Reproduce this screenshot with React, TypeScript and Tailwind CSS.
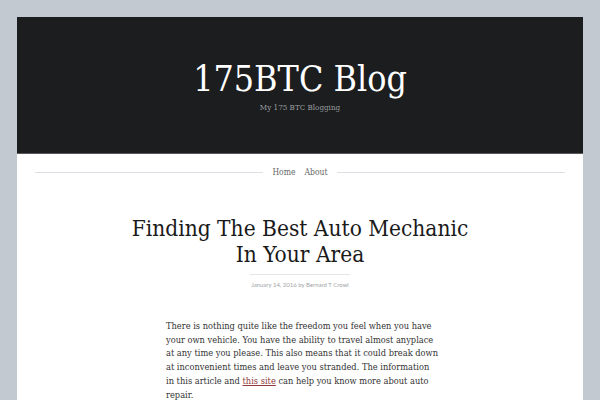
export default function App() {
  const serif = { fontFamily: '"DejaVu Serif Condensed", "DejaVu Serif", serif' };
  return (
    <div className="min-h-screen bg-[#c2c9d1] px-[17px] pt-[17px]">
      <div className="bg-white">
        <header
          className="flex h-[137px] flex-col items-center justify-center border-b border-[#55575a] bg-[#1c1d1f] text-center"
          style={serif}
        >
          <h1 className="mt-[3px] text-[35.5px] leading-[40px] text-white">175BTC Blog</h1>
          <p className="mt-[3px] text-[8px] text-[#9a9c9f]">My 175 BTC Blogging</p>
        </header>

        <nav className="flex items-center gap-[9px] px-[18px] pt-[12px]" style={serif}>
          <div className="h-px flex-1 bg-[#dcdfe3]" />
          <a className="text-[8.5px] leading-[13px] text-[#666]">Home</a>
          <a className="text-[8.5px] leading-[13px] text-[#666]">About</a>
          <div className="h-px flex-1 bg-[#dcdfe3]" />
        </nav>

        <article className="pt-[36px]">
          <h2
            className="mx-auto w-[400px] text-center text-[22.5px] leading-[26px] text-[#1a1a1a]"
            style={serif}
          >
            Finding The Best Auto Mechanic
            <br />
            In Your Area
          </h2>
          <div className="mx-auto mt-[7px] h-px w-[100px] bg-[#e3e5e8]" />
          <p
            className="mt-[5px] text-center text-[6px] leading-[9px] text-[#a0a3a7]"
            style={{ fontFamily: 'Lato, "Liberation Sans", sans-serif' }}
          >
            January 14, 2016 by Bernard T Crowl
          </p>
          <p
            className="mx-auto mt-[30px] w-[268px] whitespace-nowrap text-[9.2px] leading-[13.7px] text-[#333]"
            style={serif}
          >
            There is nothing quite like the freedom you feel when you have
            <br />
            your own vehicle. You have the ability to travel almost anyplace
            <br />
            at any time you please. This also means that it could break down
            <br />
            at inconvenient times and leave you stranded. The information
            <br />
            in this article and <a className="text-[#8e3b3b] underline">this site</a> can help
            you know more about auto
            <br />
            repair.
          </p>
        </article>
      </div>
    </div>
  );
}
